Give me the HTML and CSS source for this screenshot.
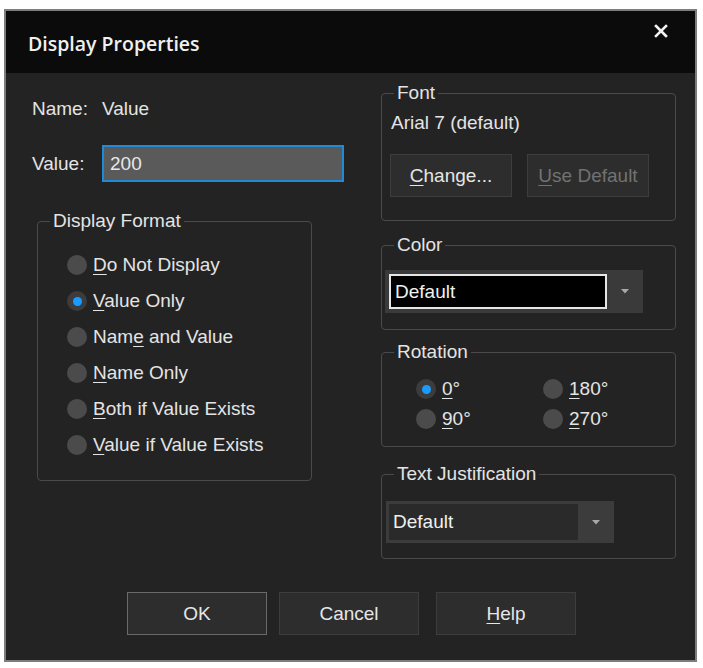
FILE: index.html
```html
<!DOCTYPE html>
<html lang="en">
<head>
<meta charset="utf-8">
<title>Display Properties</title>
<link rel="stylesheet" href="styles.css">
</head>
<body>
<div class="dialog">
  <div class="titlebar">
    <div class="title">Display Properties</div>
    <svg class="close" width="14" height="14" viewBox="0 0 14 14" aria-label="Close">
      <path d="M2 2 L12 12 M12 2 L2 12" stroke="#f2f2f2" stroke-width="2.6" stroke-linecap="square" fill="none"/>
    </svg>
  </div>

  <div class="content">
    <div class="col-left">
      <div class="field-row name-row">
        <span>Name:</span>
        <span>Value</span>
      </div>
      <div class="field-row value-row">
        <span>Value:</span>
        <input class="text-input" type="text" value="200">
      </div>

      <fieldset class="group group-format">
        <legend>Display Format</legend>
        <div class="radio-list">
          <label class="radio"><span class="radio-dot"></span><span><u>D</u>o Not Display</span></label>
          <label class="radio"><span class="radio-dot checked"></span><span><u>V</u>alue Only</span></label>
          <label class="radio"><span class="radio-dot"></span><span>Nam<u>e</u> and Value</span></label>
          <label class="radio"><span class="radio-dot"></span><span><u>N</u>ame Only</span></label>
          <label class="radio"><span class="radio-dot"></span><span><u>B</u>oth if Value Exists</span></label>
          <label class="radio"><span class="radio-dot"></span><span><u>V</u>alue if Value Exists</span></label>
        </div>
      </fieldset>
    </div>

    <div class="col-right">
      <fieldset class="group group-font">
        <legend>Font</legend>
        <div class="font-name">Arial 7 (default)</div>
        <div class="font-buttons">
          <button class="btn btn-small"><u>C</u>hange...</button>
          <button class="btn btn-small btn-disabled"><u>U</u>se Default</button>
        </div>
      </fieldset>

      <fieldset class="group group-color">
        <legend>Color</legend>
        <div class="combo combo-color">
          <div class="combo-field">Default</div>
          <div class="combo-arrow"><svg width="8" height="5" viewBox="0 0 8 5"><path d="M0 0 H8 L4 4.5 Z" fill="#a8a8a8"/></svg></div>
        </div>
      </fieldset>

      <fieldset class="group group-rotation">
        <legend>Rotation</legend>
        <div class="rotation-grid">
          <label class="radio radio-compact"><span class="radio-dot checked"></span><span><u>0</u>°</span></label>
          <label class="radio radio-compact"><span class="radio-dot"></span><span><u>1</u>80°</span></label>
          <label class="radio radio-compact"><span class="radio-dot"></span><span><u>9</u>0°</span></label>
          <label class="radio radio-compact"><span class="radio-dot"></span><span><u>2</u>70°</span></label>
        </div>
      </fieldset>

      <fieldset class="group group-justify">
        <legend>Text Justification</legend>
        <div class="combo combo-justify">
          <div class="combo-field">Default</div>
          <div class="combo-arrow"><svg width="8" height="5" viewBox="0 0 8 5"><path d="M0 0 H8 L4 4.5 Z" fill="#a8a8a8"/></svg></div>
        </div>
      </fieldset>
    </div>
  </div>

  <div class="actions">
    <button class="btn btn-default">OK</button>
    <button class="btn">Cancel</button>
    <button class="btn btn-help"><u>H</u>elp</button>
  </div>
</div>
</body>
</html>
```

FILE: styles.css
```css
* {
  box-sizing: border-box;
}

html,
body {
  margin: 0;
  background: #ffffff;
}

body {
  font-family: "Liberation Sans", Arial, sans-serif;
  font-size: 19px;
  color: #e4e4e4;
}

u {
  text-decoration-thickness: 1px;
  text-underline-offset: 3px;
}

.dialog {
  margin: 9px 0 0 4px;
  width: 693px;
  height: 653px;
  border: 2px solid #7d7d7d;
  background: #232323;
  display: flex;
  flex-direction: column;
}

.titlebar {
  height: 62px;
  background: #0b0b0b;
  display: flex;
  justify-content: space-between;
  align-items: flex-start;
  padding: 13px 27px 0 22px;
}

.title {
  margin-top: 7px;
  font-family: "Open Sans", "Noto Sans", sans-serif;
  font-weight: 600;
  font-size: 19.5px;
  line-height: 26px;
  color: #f0f0f0;
}

.close {
  display: block;
}

.content {
  display: grid;
  grid-template-columns: 312px 295px;
  column-gap: 37px;
  padding: 9px 19px 0 26px;
}

/* Left column */
.field-row {
  display: grid;
  grid-template-columns: 70px 1fr;
  align-items: center;
  line-height: 22px;
}

.name-row {
  margin-top: 16px;
}

.value-row {
  margin-top: 25px;
}

.text-input {
  width: 242px;
  height: 37px;
  border: 2px solid #1f8ad8;
  background: #5a5a5a;
  color: #e8e8e8;
  font: inherit;
  padding: 0 6px;
  outline: none;
  margin: 0;
}

/* Group boxes */
.group {
  margin: 0;
  min-inline-size: 0;
  border: 1px solid #4a4a4a;
  border-radius: 4px;
  padding: 0 3px;
}

.group legend {
  margin-left: 9px;
  padding: 0 3px;
  line-height: 22px;
}

.group-format {
  margin: 28px 0 0 5px;
  width: 275px;
  padding-top: 15px;
  padding-bottom: 17px;
}

.radio-list {
  padding-left: 26px;
}

.radio {
  display: flex;
  align-items: center;
  gap: 6px;
  height: 36px;
  line-height: 22px;
}

.radio-compact {
  height: 30px;
}

.radio-dot {
  flex: none;
  width: 20px;
  height: 20px;
  border-radius: 50%;
  background: #4b4b4b;
  display: flex;
  align-items: center;
  justify-content: center;
}

.radio-dot.checked {
  background: #3c3c3c;
}

.radio-dot.checked::after {
  content: "";
  width: 9px;
  height: 9px;
  border-radius: 50%;
  background: #1a9cff;
}

/* Right column */
.col-right {
  display: flex;
  flex-direction: column;
}

.group-font {
  padding-top: 8px;
  padding-bottom: 23px;
}

.font-name {
  padding-left: 6px;
  line-height: 22px;
}

.font-buttons {
  margin-top: 20px;
  padding-left: 5px;
  display: flex;
  gap: 15px;
}

.group-color {
  margin-top: 13px;
  padding-top: 14px;
  padding-bottom: 16px;
}

.group-rotation {
  margin-top: 11px;
  padding-top: 11px;
  padding-bottom: 12px;
}

.rotation-grid {
  display: grid;
  grid-template-columns: 127px auto;
  padding-left: 31px;
}

.group-justify {
  margin-top: 16px;
  padding-top: 16px;
  padding-bottom: 15px;
}

/* Combo boxes */
.combo {
  display: flex;
}

.combo-field {
  display: flex;
  align-items: center;
  padding-left: 4px;
  color: #f0f0f0;
}

.combo-arrow {
  flex: 1;
  display: flex;
  align-items: center;
  justify-content: center;
}

.combo-arrow svg {
  display: block;
}

.combo-color {
  width: 258px;
  height: 43px;
  background: #3a3a3a;
  padding: 4px 0 4px 4px;
}

.combo-color .combo-field {
  width: 218px;
  background: #000000;
  border: 2px solid #e6e6e6;
}

.combo-justify {
  margin-left: 1px;
  width: 228px;
  height: 42px;
  background: #3c3c3c;
  padding: 3px 0 3px 3px;
}

.combo-justify .combo-field {
  width: 189px;
  background: #2a2a2a;
}

/* Buttons */
.btn {
  width: 140px;
  height: 43px;
  background: #2d2d2d;
  border: 1px solid #3d3d3d;
  color: #e6e6e6;
  font: inherit;
  padding: 0;
  margin: 0;
}

.btn-small {
  width: 122px;
}

.btn-disabled {
  color: #727272;
}

.btn-default {
  border-color: #6a6a6a;
}

.actions {
  margin-top: 33px;
  padding-left: 121px;
  display: flex;
  gap: 12px;
}

.btn-help {
  margin-left: 5px;
}
```
